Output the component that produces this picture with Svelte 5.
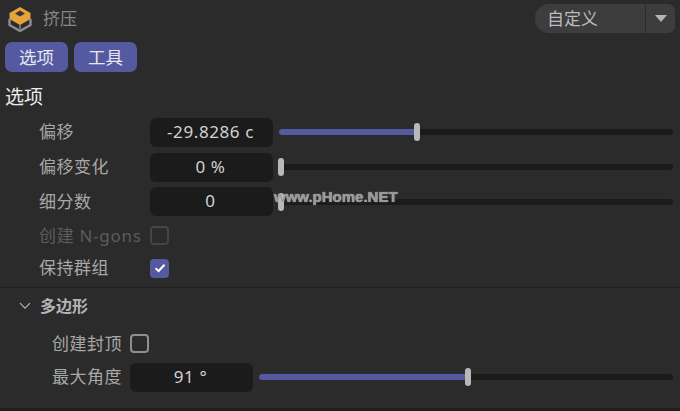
<script>
  const rows = [
    { label: '偏移', value: '-29.8286 c', percent: 34.4 },
    { label: '偏移变化', value: '0 %', percent: 0 },
    { label: '细分数', value: '0', percent: 0 }
  ]
</script>

<div class="panel">
  <header class="top">
    <div class="title">
      <svg class="logo" width="26" height="28" viewBox="0 0 26 28" fill="none">
        <path d="M2.5 8 L13 2 L23.5 8 V14 L13 20 L2.5 14 Z" fill="#e8a33d" />
        <path d="M8 8.5 L13 5.5 L18 8.5 L13 11.5 Z" fill="#3a3630" />
        <path d="M2.5 14 V20 L13 26 L23.5 20 V14" stroke="#8f8f8f" stroke-width="2.4" stroke-linejoin="round" />
        <path d="M13 20 V24" stroke="#8f8f8f" stroke-width="1.4" />
      </svg>
      <span>挤压</span>
    </div>
    <div class="combo">
      <span class="combo-text">自定义</span>
      <span class="combo-arrow"><i></i></span>
    </div>
  </header>

  <div class="tabs">
    <button>选项</button>
    <button>工具</button>
  </div>

  <h2>选项</h2>

  <div class="group">
    {#each rows as row}
      <div class="row">
        <label>{row.label}</label>
        <div class="field">{row.value}</div>
        <div class="slider">
          <div class="fill" style="width: {row.percent}%"></div>
          <div class="thumb"></div>
        </div>
      </div>
    {/each}
    <div class="row check-row disabled">
      <label>创建 N-gons</label>
      <span class="box"></span>
    </div>
    <div class="row check-row">
      <label>保持群组</label>
      <span class="box on">
        <svg width="12" height="10" viewBox="0 0 12 10" fill="none">
          <path d="M1.5 5.2 L4.6 8 L10.5 1.8" stroke="#fff" stroke-width="2" />
        </svg>
      </span>
    </div>
  </div>

  <div class="section">
    <svg width="12" height="8" viewBox="0 0 12 8" fill="none">
      <path d="M1 1.2 L6 6.2 L11 1.2" stroke="#b4b4b4" stroke-width="1.2" />
    </svg>
    <span>多边形</span>
  </div>

  <div class="group sub">
    <div class="row check-row light">
      <label>创建封顶</label>
      <span class="box outline"></span>
    </div>
    <div class="row">
      <label>最大角度</label>
      <div class="field">91 °</div>
      <div class="slider">
        <div class="fill" style="width: 50%"></div>
        <div class="thumb"></div>
      </div>
    </div>
  </div>

  <div class="bottom"></div>
  <div class="watermark">www.pHome.NET</div>
</div>

<style>
  :global(body) {
    margin: 0;
    background: #2b2b2b;
  }

  .panel {
    position: relative;
    width: 680px;
    height: 411px;
    overflow: hidden;
    display: flex;
    flex-direction: column;
    background: #2b2b2b;
    color: #a8a8a8;
    font-family: "Noto Sans CJK SC", "Noto Sans", sans-serif;
    font-size: 17px;
    box-sizing: border-box;
  }

  .top {
    height: 37px;
    display: flex;
    align-items: center;
    justify-content: space-between;
    padding: 0 5px 0 7px;
    flex: none;
  }

  .title {
    display: flex;
    align-items: center;
    gap: 10px;
    color: #868686;
    font-size: 17px;
    line-height: 30px;
  }

  .title span {
    padding-bottom: 2px;
  }

  .logo {
    display: block;
  }

  .combo {
    width: 140px;
    height: 29px;
    margin-top: -1px;
    display: flex;
    background: #3d3d3d;
    border-radius: 14px 7px 7px 14px;
    color: #bcbcbc;
    font-size: 17px;
  }

  .combo-text {
    flex: 1;
    padding-left: 12px;
    line-height: 27px;
  }

  .combo-arrow {
    width: 29px;
    display: flex;
    align-items: center;
    justify-content: center;
    border-left: 1px solid #2c2c2c;
  }

  .combo-arrow i {
    width: 0;
    height: 0;
    border-left: 6px solid transparent;
    border-right: 6px solid transparent;
    border-top: 7px solid #b4b4b4;
  }

  .tabs {
    display: flex;
    gap: 6px;
    padding: 5px 0 0 5px;
    flex: none;
  }

  .tabs button {
    width: 63px;
    height: 30px;
    padding: 0;
    border: 0;
    border-radius: 7px;
    background: #5559a0;
    color: #e6e6ee;
    font: inherit;
    font-size: 17.5px;
    line-height: 28px;
  }

  h2 {
    margin: 0;
    height: 24px;
    margin-top: 12px;
    padding-left: 5px;
    color: #ececec;
    font-size: 19px;
    font-weight: 400;
    line-height: 23px;
  }

  .group {
    display: flex;
    flex-direction: column;
    padding-top: 7px;
    height: 180px;
    box-sizing: border-box;
    border-bottom: 1px solid #1f1f1f;
    flex: none;
  }

  .row {
    display: flex;
    align-items: center;
    height: 34.8px;
    padding-left: 39px;
    padding-right: 7px;
    flex: none;
  }

  .row label {
    width: 111px;
    flex: none;
    white-space: nowrap;
    letter-spacing: 0.5px;
    line-height: 22px;
    padding-bottom: 2px;
  }

  .field {
    width: 123px;
    height: 29px;
    flex: none;
    border-radius: 6px;
    background: #1b1b1b;
    color: #d2d2d2;
    font-family: "Noto Sans", sans-serif;
    font-size: 17px;
    letter-spacing: 0.6px;
    line-height: 28px;
    text-align: center;
    padding-right: 2px;
    box-sizing: border-box;
  }

  .slider {
    position: relative;
    flex: 1;
    height: 6px;
    margin-left: 6px;
    display: flex;
    align-items: center;
    border-radius: 3px;
    background: #1b1b1b;
  }

  .fill {
    height: 6px;
    border-radius: 3px 0 0 3px;
    background: #5559a0;
    flex: none;
  }

  .thumb {
    width: 6px;
    height: 18px;
    margin-left: -1px;
    border-radius: 3px;
    background: #b8b8b8;
    flex: none;
  }

  .check-row {
    height: 31.5px;
  }

  .disabled {
    color: #5c5c5c;
    height: 33px;
  }

  .disabled label {
    font-family: "Noto Sans", "Noto Sans CJK SC", sans-serif;
    font-size: 17px;
    letter-spacing: 0.7px;
    padding-bottom: 0;
  }

  .box {
    width: 19px;
    height: 19px;
    box-sizing: border-box;
    border: 2px solid #454545;
    border-radius: 4px;
    display: flex;
    align-items: center;
    justify-content: center;
    flex: none;
  }

  .box.on {
    border: 0;
    background: #5559a0;
  }

  .box.outline {
    border-color: #8f8f8f;
  }

  .section {
    height: 35px;
    display: flex;
    align-items: center;
    gap: 9px;
    padding-left: 19px;
    color: #b4b4b4;
    font-size: 16px;
    font-weight: 700;
    flex: none;
  }

  .section span {
    padding-bottom: 1px;
  }

  .sub {
    height: auto;
    padding-top: 4px;
    border: 0;
  }

  .sub .row {
    padding-left: 52px;
  }

  .sub .row label {
    width: 78px;
  }

  .sub .check-row {
    height: 33px;
  }

  .light {
    color: #a8a8a8;
  }

  .bottom {
    position: absolute;
    left: 0;
    right: 0;
    bottom: 0;
    height: 3px;
    background: #1f1f1f;
  }

  .watermark {
    position: absolute;
    left: 274px;
    top: 188px;
    color: #999;
    font-family: "Liberation Sans", sans-serif;
    font-size: 15px;
    font-weight: 700;
    text-shadow: 0 0 1px #d8d8d8;
  }
</style>
